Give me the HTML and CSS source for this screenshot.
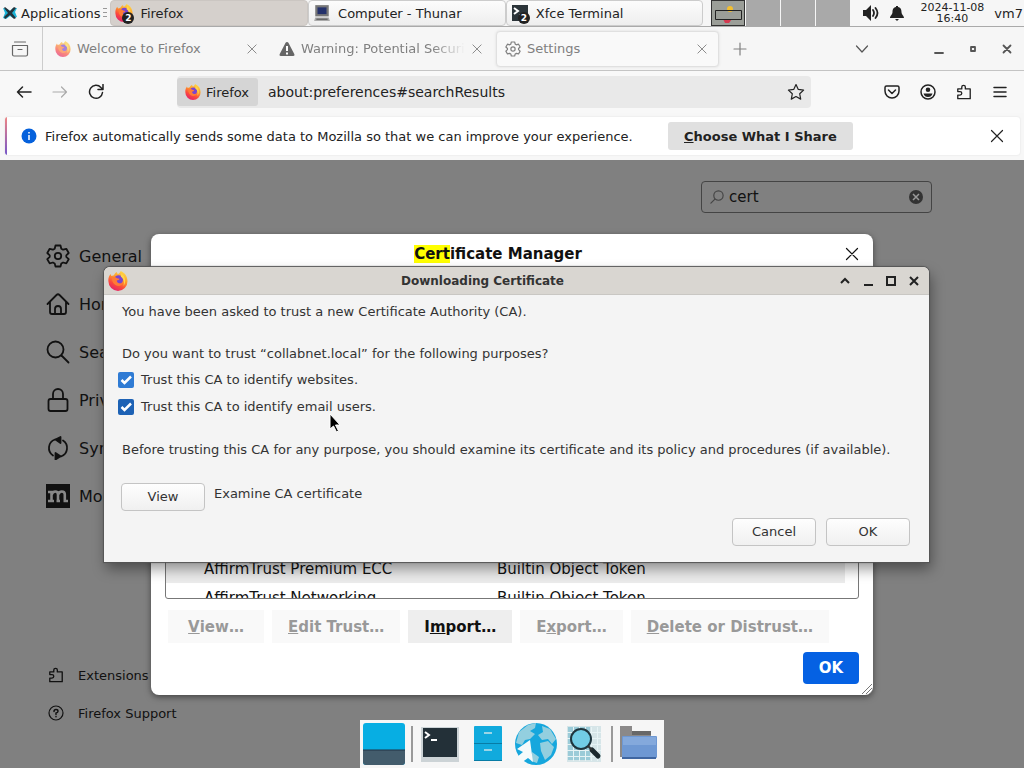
FILE: index.html
```html
<!DOCTYPE html>
<html lang="en">
<head>
<meta charset="utf-8">
<meta name="viewport" content="width=device-width, initial-scale=1">
<title>Settings</title>
<link rel="stylesheet" href="styles.css">
</head>
<body>
<svg class="defs" aria-hidden="true">
  <defs>
    <linearGradient id="flame" x1="0.8" y1="0" x2="0.3" y2="1">
      <stop offset="0" stop-color="#ffe04a"/><stop offset="0.4" stop-color="#ff9a2b"/><stop offset="0.7" stop-color="#fb4a3c"/><stop offset="1" stop-color="#e2206c"/>
    </linearGradient>
    <symbol id="firefox" viewBox="0 0 20 20">
      <path fill="url(#flame)" d="M1 5.500 2.400 3l1 2 2.600-.8C6.500 2.700 7.500 1.600 9 1c-.2 1 .3 1.700 1.200 2.100C11.600 2 12.500 1 12.600 0c4.500 1.800 6.900 5.800 6.900 10.200A9.600 9.600 0 0 1 10 20 9.700 9.700 0 0 1 .4 10.300C.3 8.500.4 7 1 5.500Z"/>
      <circle cx="10.600" cy="8.700" r="4.400" fill="#7a45cf"/>
      <path fill="#ff7a36" d="M4 6.500c2-1 3.700-.5 5 .8l2.500.4c-.2 1-1.400 1.600-2.700 1.900.1 2.700 3 3.800 6.200 2.400-1.300 2.800-4.200 3.500-6.500 2.600C5.500 13.500 3.600 10 4 6.500Z"/>
      <path fill="#ffd54a" d="M13.500 2.500c4 3 5 8.500 2 12.500 1-4 .5-7.500-2.700-9.300Z"/>
    </symbol>
    <symbol id="cross" viewBox="0 0 16 16"><path d="m2.500 2.500 11 11m0-11-11 11"/></symbol>
    <symbol id="gear" viewBox="0 0 24 24"><path d="m9.500 1.500 5 0 .8 3.200 1.800 1 3.200-.9 2.400 4.200-2.400 2.300v1.600l2.400 2.300-2.400 4.200-3.200-.9-1.800 1-.8 3h-5l-.8-3-1.800-1-3.200.9-2.400-4.200 2.400-2.300v-1.600L1.300 9l2.400-4.200 3.200.9 1.800-1Z"/><circle cx="12" cy="12" r="3.200"/></symbol>
    <symbol id="puzzle" viewBox="0 0 18 18"><path d="M2 16.500V12.500h2.500a2 2 0 0 0 0-4H2V5.500h4.500V3.500a2 2 0 0 1 4 0v2H16v11Z"/></symbol>
    <symbol id="lens" viewBox="0 0 24 24"><circle cx="9.500" cy="9.500" r="8"/><path d="m15.500 15.500 7 7"/></symbol>
  </defs>
</svg>

<div class="desktop">
  <header class="panel">
    <button class="apps"><svg class="i16 xfce" viewBox="0 0 16 16"><path fill="#1bb4d8" d="m1 3 4 1 3 2 3-3 4 0-2 4 2 5-4 1-3-2-4 3-3-1 2-5Z"/><path fill="#23333b" d="m3 2 5 4 4-4 2 1-4 5 4 5-2 1-4-4-5 4-1-2 4-4-4-5Z"/></svg><span>Applications</span></button>
    <span class="grip"></span>
    <nav class="tasks">
      <button class="task on"><svg class="i18"><use href="#firefox"/></svg><b class="badge">2</b><span>Firefox</span></button>
      <button class="task"><svg class="i18" viewBox="0 0 16 16"><path fill="#777" d="M2 1h12v10H2Z"/><path fill="#24316b" d="M4 3h8v6H4Z"/><path fill="#aaa" d="M2 12h12l1 3H1Z"/><path stroke="#555" d="M3 13.500h10"/></svg><span>Computer - Thunar</span></button>
      <button class="task"><svg class="i18" viewBox="0 0 18 18"><path fill="#2b3439" d="M1 1h16v16H1Z"/><path fill="none" stroke="#fff" stroke-width="2" d="m3 4 4 3-4 3M8 11h4"/></svg><b class="badge">2</b><span>Xfce Terminal</span></button>
    </nav>
    <div class="pager"><span class="ws on"><svg viewBox="0 0 32 26"><circle cx="18" cy="8" r="3" fill="#f3bf30"/><path fill="#d43a50" d="M11 18h9l-3 4h-4Z"/><path fill="none" stroke="#222" d="M3.500 9.500h26v9h-26Z"/></svg></span><span class="ws"></span><span class="ws"></span><span class="ws"></span></div>
    <svg class="i18 dark speaker" viewBox="0 0 18 18"><path fill="currentColor" d="M1 6h3l5-5v16l-5-5H1Z"/><path class="line thick" d="M11 6q2 3 0 6M13.500 4q4 5 0 10"/></svg>
    <svg class="i16 dark bell" viewBox="0 0 16 16"><path fill="currentColor" d="M7 1h2v1c3 .6 3.500 3 3.500 5 0 3 2.500 3.500 2.500 6H1c0-2.500 2.500-3 2.500-6 0-2 .5-4.400 3.500-5ZM6 14h4l-2 2Z"/></svg>
    <time class="clock">2024-11-08<br>16:40</time>
    <span class="user">vm7</span>
  </header>

  <div class="tabs">
    <button class="recent" aria-label="Recent browsing"><svg class="i18 line" viewBox="0 0 18 18"><path d="M3.500 2h11M1.500 5.500h15v9q0 1.500-1.500 1.500H3q-1.500 0-1.500-1.500ZM7 9.500h4"/></svg></button>
    <div class="tab"><svg class="i16 faded"><use href="#firefox"/></svg><span>Welcome to Firefox</span><button class="close" aria-label="Close tab"><svg class="i12 line"><use href="#cross"/></svg></button></div>
    <div class="tab long"><svg class="i16" viewBox="0 0 16 16"><path fill="#666" d="M8 1q1 0 1.400.8l6 11.500Q16 15 14.300 15H1.700Q0 15 .6 13.300l6-11.500Q7 1 8 1Z"/><path stroke="#fff" stroke-width="2" d="M8 5v5M8 11.500v2"/></svg><span class="cut">Warning: Potential Security Risk Ahead</span><button class="close" aria-label="Close tab"><svg class="i12 line"><use href="#cross"/></svg></button></div>
    <div class="tab active"><svg class="i16 line heavy"><use href="#gear"/></svg><span>Settings</span><button class="close" aria-label="Close tab"><svg class="i12 line"><use href="#cross"/></svg></button></div>
    <button class="new" aria-label="New tab"><svg class="i16 line" viewBox="0 0 16 16"><path d="M8 2v12M2 8h12"/></svg></button>
    <div class="wincontrols">
      <button class="down" aria-label="List tabs"><svg class="i14 line" viewBox="0 0 14 14"><path d="m1.500 4 5.500 6 5.500-6"/></svg></button>
      <button aria-label="Minimize"><svg class="i12 line thick" viewBox="0 0 12 12"><path d="M2 10h8"/></svg></button>
      <button aria-label="Restore"><svg class="i12 line thick" viewBox="0 0 12 12"><path d="M4 4h4v4H4Z"/></svg></button>
      <button aria-label="Close"><svg class="i12 line thick" viewBox="0 0 12 12"><path d="m2.500 2.500 7 7m0-7-7 7"/></svg></button>
    </div>
  </div>

  <div class="toolbar">
    <div class="nav">
      <button aria-label="Back"><svg class="i16 line mid" viewBox="0 0 16 16"><path d="M15 8H1.500m5-5-5 5 5 5"/></svg></button>
      <button class="off" aria-label="Forward" disabled><svg class="i16 line" viewBox="0 0 16 16"><path d="M1 8h13.500m-5-5 5 5-5 5"/></svg></button>
      <button aria-label="Reload"><svg class="i16 line mid" viewBox="0 0 16 16"><path d="M14.500 8.500a6.500 6.500 0 1 1-1.600-5L14.500 5M15 .5v5h-5"/></svg></button>
    </div>
    <div class="urlbar">
      <span class="identity"><svg class="i16"><use href="#firefox"/></svg><span>Firefox</span></span>
      <input class="url" aria-label="Address" value="about:preferences#searchResults">
      <svg class="i18 line" viewBox="0 0 18 18"><path d="m9 1.500 2.300 4.900 5.300.7-3.900 3.700 1 5.300L9 13.500l-4.700 2.600 1-5.300L1.400 7.100l5.300-.7Z"/></svg>
    </div>
    <div class="actions">
      <button aria-label="Save to Pocket"><svg class="i16 line mid" viewBox="0 0 16 16"><path d="M2.500 2h11Q15 2 15 3.500V7a7 7 0 0 1-14 0V3.500Q1 2 2.500 2ZM4.500 6 8 9.500 11.500 6"/></svg></button>
      <button aria-label="Account"><svg class="i16 line mid" viewBox="0 0 16 16"><circle cx="8" cy="8" r="7"/><path fill="currentColor" stroke="none" d="M8 3.500a2.300 2.300 0 1 1 0 4.600 2.300 2.300 0 0 1 0-4.600ZM3.500 9.500h9Q11.500 13 8 13T3.500 9.500Z"/></svg></button>
      <button aria-label="Extensions"><svg class="i16 line mid"><use href="#puzzle"/></svg></button>
      <button aria-label="Menu"><svg class="i16 line mid" viewBox="0 0 16 16"><path d="M2 3.500h12M2 8h12M2 12.500h12"/></svg></button>
    </div>
  </div>

  <div class="notice">
    <div class="bar">
      <svg class="i16" viewBox="0 0 16 16"><circle cx="8" cy="8" r="7.500" fill="#0561dc"/><path stroke="#fff" stroke-width="1.500" d="M8 4v1.500M8 7v5"/></svg>
      <span>Firefox automatically sends some data to Mozilla so that we can improve your experience.</span>
      <button class="choose"><u>C</u>hoose What I Share</button>
      <button class="dismiss" aria-label="Dismiss"><svg class="i16 line"><use href="#cross"/></svg></button>
    </div>
  </div>

  <main class="page">
    <nav class="side">
      <a href="#general"><svg class="i24 line heavy"><use href="#gear"/></svg>General</a>
      <a href="#home"><svg class="i24 line heavy" viewBox="0 0 24 24"><path d="m1.500 12 9-9q1.500-1.500 3 0l9 9M4 10v10q0 2 2 2h12q2 0 2-2V10M9 22v-5a3 3 0 0 1 6 0v5"/></svg>Home</a>
      <a href="#search"><svg class="i24 line heavy"><use href="#lens"/></svg>Search</a>
      <a href="#privacy"><svg class="i24 line heavy" viewBox="0 0 24 24"><path d="M4.500 11h15q2 0 2 2v8q0 2-2 2h-15q-2 0-2-2v-8q0-2 2-2ZM7 11V6a5 5 0 0 1 10 0v5"/></svg>Privacy &amp; Security</a>
      <a href="#sync"><svg class="i24 line heavy" viewBox="0 0 24 24"><path d="M9 3.500A9 9 0 0 0 7 19.500M15 20.500A9 9 0 0 0 17 4.500"/><path fill="currentColor" d="m14.500 1-5 2.600 5 3.400ZM9.500 17v6.500l5-3.200Z"/></svg>Sync</a>
      <a href="#more"><svg class="i24" viewBox="0 0 24 24"><path fill="#111" d="M0 0h24v24H0Z"/><path fill="none" stroke="#888" stroke-width="2.600" d="M2 8h3.500v9M2 17h6M5.500 11q1-3.500 3.800-3.500 2.700 0 2.700 3V17m-1.500 0H14M12 11q1-3.500 3.800-3.500 3 0 3 3V17H22"/></svg>More from Mozilla</a>
    </nav>
    <nav class="foot">
      <a href="#addons"><svg class="i16 line mid"><use href="#puzzle"/></svg>Extensions &amp; Themes</a>
      <a href="#support"><svg class="i16 line" viewBox="0 0 16 16"><circle cx="8" cy="8" r="7"/><path class="mid" d="M6 6.500q0-2 2-2t2 1.700Q10 7.500 8 8v1.500M8 11.500v.3"/></svg>Firefox Support</a>
    </nav>
    <div class="find">
      <svg class="i14 line flip"><use href="#lens"/></svg>
      <input aria-label="Find in Settings" value="cert">
      <button aria-label="Clear"><svg class="i14" viewBox="0 0 14 14"><circle cx="7" cy="7" r="7" fill="#333"/><path stroke="#999" stroke-width="1.500" d="m4 4 6 6m0-6-6 6"/></svg></button>
    </div>
  </main>

  <section class="manager" role="dialog" aria-labelledby="mt">
    <div class="mhead"><h2 id="mt"><mark>Cert</mark>ificate Manager</h2><button aria-label="Close"><svg class="i16 line"><use href="#cross"/></svg></button></div>
    <div class="list">
      <table>
        <tr class="alt"><td>AffirmTrust Premium ECC</td><td>Builtin Object Token</td></tr>
        <tr><td>AffirmTrust Networking</td><td>Builtin Object Token</td></tr>
      </table>
    </div>
    <div class="mbuttons">
      <button disabled><u>V</u>iew…</button>
      <button disabled><u>E</u>dit Trust…</button>
      <button>I<u>m</u>port…</button>
      <button disabled>E<u>x</u>port…</button>
      <button disabled><u>D</u>elete or Distrust…</button>
    </div>
    <button class="primary">OK</button>
    <svg class="resize" viewBox="0 0 10 10"><path stroke="#777" d="m0 10 10-10M4 10l6-6M7.500 10 10 7.500"/></svg>
  </section>

  <section class="trust" role="dialog" aria-labelledby="tt">
    <div class="thead">
      <svg class="i20"><use href="#firefox"/></svg>
      <h2 id="tt">Downloading Certificate</h2>
      <div class="tctl">
        <button aria-label="Shade"><svg class="i12 line bold" viewBox="0 0 12 12"><path d="m2 8 4-4 4 4"/></svg></button>
        <button aria-label="Minimize"><svg class="i12 line bold" viewBox="0 0 12 12"><path d="M2 10h9"/></svg></button>
        <button aria-label="Maximize"><svg class="i12 line bold" viewBox="0 0 12 12"><path d="M2 2h8v8H2Z"/></svg></button>
        <button aria-label="Close"><svg class="i12 line bold" viewBox="0 0 12 12"><path d="m2 2 8 8m0-8-8 8"/></svg></button>
      </div>
    </div>
    <div class="tbody">
      <p>You have been asked to trust a new Certificate Authority (CA).</p>
      <p class="ask">Do you want to trust “collabnet.local” for the following purposes?</p>
      <label><input type="checkbox" checked><span>Trust this CA to identify websites.</span></label>
      <label class="second"><input type="checkbox" checked><span>Trust this CA to identify email users.</span></label>
      <p class="before">Before trusting this CA for any purpose, you should examine its certificate and its policy and procedures (if available).</p>
      <div class="exam"><button id="view">View</button><label class="plain" for="view">Examine CA certificate</label></div>
      <div class="confirm"><button>Cancel</button><button>OK</button></div>
    </div>
    <svg class="pointer" viewBox="0 0 12 20"><path fill="#000" stroke="#fff" d="M1 1v15l3.500-3 3 6 2-1-3-6H11Z"/></svg>
  </section>

  <nav class="dock">
    <button aria-label="Show desktop"><svg viewBox="0 0 42 42"><rect width="42" height="42" rx="3" fill="#07aee3"/><path fill="#435c6c" d="M0 27h42v12q0 3-3 3H3q-3 0-3-3Z"/><path stroke="#234" d="M0 27h42"/></svg></button>
    <i></i>
    <button aria-label="Terminal"><svg viewBox="0 0 42 42"><path fill="#ccd3d6" d="M2 4h38v35H2Z"/><path fill="#233038" d="M4 5h34v29H4Z"/><path fill="none" stroke="#fff" stroke-width="2" d="m6 9 4 3-4 3M12 17h6"/></svg></button>
    <button aria-label="Files"><svg viewBox="0 0 42 42"><rect x="7" y="3" width="28" height="35" rx="1" fill="#11aadd"/><path stroke="#087ca5" d="M7 20.500h28M7 37.500h28"/><path stroke="#9bd5e6" stroke-width="2" d="M17 10h8M17 27h8"/></svg></button>
    <button aria-label="Web browser"><svg viewBox="0 0 42 42"><circle cx="21" cy="21" r="21" fill="#16a7dd"/><path fill="#93cfdf" d="m4 9 9-7 8-2-1 5-5 3 5 3-5 5-5 1-3 5-6-2Zm23-6 8 3 6 10-4 5-4-5-6 1-4-5 5-3Zm-2 17 8-2 6 6-3 8-6 5-4-9Zm-8 9 7 5-2 6-6-2Z"/><path fill="#f5fafa" d="M15 17l3 22-5-4-7 5-4-6 6-5-6-3Z"/></svg></button>
    <button aria-label="Search files"><svg viewBox="0 0 42 42"><path fill="#d6e5e8" d="M4 3h34v36H4Z"/><path fill="#9bcbd8" d="M5 4h22v33H5Z"/><path stroke="#e7f3f5" d="M4 9.500h34M4 15.500h34M4 21.500h34M4 27.500h34M4 33.500h34M10.500 4v34M16.500 4v34M22.500 4v34M28.500 4v34M34.500 4v34"/><circle cx="18" cy="16" r="10" fill="#71cce5" stroke="#1e343d" stroke-width="2"/><path stroke="#1c292e" stroke-width="5" stroke-linecap="round" d="m29 27 6 6"/><path stroke="#333" stroke-width="2" d="m25 23 4 4"/></svg></button>
    <i></i>
    <button aria-label="Home folder"><svg viewBox="0 0 42 42"><path fill="#8b8989" d="M1 3h12v5h19v26H1Z"/><path fill="#686868" d="M13 8h19v4H13Z"/><rect x="3" y="13" width="35" height="22" rx="1" fill="#6e98d3"/><path fill="#84a9dc" d="M4 14h33v8H4Z"/><path fill="#3f66a1" d="M3 34h34v2H3Z"/></svg></button>
  </nav>
</div>
</body>
</html>
```
FILE: styles.css
```css
* { box-sizing: border-box; }
body { margin: 0; font: 13px "DejaVu Sans", sans-serif; color: #222; }
button, input { font: inherit; color: inherit; border: 0; background: none; padding: 0; margin: 0; }
button { display: flex; align-items: center; justify-content: center; }
h2, p { margin: 0; }
a { color: inherit; text-decoration: none; }
svg { display: block; flex: none; }
.defs { position: absolute; width: 0; height: 0; }
.desktop { position: relative; display: flex; flex-direction: column; min-height: 100vh; overflow: hidden; background: #808080; }

.i12 { width: 12px; height: 12px; }
.i14 { width: 14px; height: 14px; }
.i16 { width: 16px; height: 16px; }
.i18 { width: 18px; height: 18px; }
.i20 { width: 20px; height: 20px; }
.i24 { width: 24px; height: 24px; }
.line { fill: none; stroke: currentColor; stroke-width: 1.2; stroke-linejoin: round; stroke-linecap: round; }
.mid { stroke-width: 1.5; }
.thick, .heavy { stroke-width: 1.8; }
.bold { stroke-width: 2; stroke-linecap: butt; stroke-linejoin: miter; }
.flip { transform: scaleX(-1); stroke-width: 2; }
.faded { opacity: 0.65; }
.dark { color: #222; }

.panel { display: flex; align-items: center; height: 26px; padding-right: 1px; background: #f6f6f6; white-space: nowrap; }
.apps { gap: 3px; padding-left: 2px; }
.grip { width: 4px; height: 10px; margin: 0 3px; background: repeating-linear-gradient(#999 0 1px, transparent 1px 4px); }
.tasks { display: flex; flex: 1; height: 26px; }
.task { position: relative; flex: 1; justify-content: flex-start; gap: 7px; padding-left: 4px; border: 1px solid #ccc; border-radius: 4px; background: linear-gradient(#fcfcfc, #eee); }
.task.on { background: #d5d0cc; border-color: #cbc6c2; }
.badge { position: absolute; left: 11px; top: 11px; width: 12px; height: 12px; border-radius: 6px; background: #222; color: #fff; font-size: 9px; line-height: 12px; text-align: center; }
.pager { display: flex; gap: 1px; height: 26px; margin-left: 8px; }
.ws { width: 34px; background: #a9a9a9; }
.ws.on { border: 1px solid #333; background: #9b9e98; }
.speaker { margin-left: 12px; }
.bell { margin-left: 9px; }
.clock { margin-left: 15px; font-size: 11px; line-height: 11px; text-align: center; }
.user { margin-left: 10px; }

.tabs { display: flex; align-items: center; height: 45px; background: #f6f6f6; border-top: 1px solid #aaa; border-bottom: 1px solid #c4c4c4; color: #808080; }
.recent { width: 43px; height: 100%; padding-right: 3px; border-right: 1px solid #ccc; color: #666; }
.tab { display: flex; align-items: center; gap: 6px; width: 222px; height: 36px; padding: 0 7px 0 12px; white-space: nowrap; }
.tab .close { margin-left: auto; }
.tab.active { width: 223px; padding: 0 10px 0 8px; background: #f9f9f9; border: 1px solid #e0e0e0; border-radius: 4px; box-shadow: 0 0 3px #ddd; }
.tab.long { width: 231px; padding: 0 13px 0 14px; }
.cut { flex: 1; overflow: hidden; -webkit-mask-image: linear-gradient(90deg, #000 80%, transparent); mask-image: linear-gradient(90deg, #000 80%, transparent); }
.new { width: 42px; height: 36px; }
.wincontrols { display: flex; gap: 22px; margin-left: auto; padding-right: 11px; color: #555; }
.down { margin-right: 42px; }

.toolbar { display: flex; align-items: center; height: 42px; background: #f8f8f8; }
.nav { display: flex; gap: 20px; padding-left: 16px; }
.off { color: #aaa; }
.urlbar { display: flex; flex: 1; align-items: center; height: 32px; margin: 0 73px; padding-right: 6px; border-radius: 4px; background: #e9e9e9; }
.identity { display: flex; align-items: center; gap: 5px; height: 28px; padding: 0 9px 0 8px; border-radius: 3px; background: #d5d5d5; }
.url { flex: 1; min-width: 0; padding-left: 10px; font-size: 14px; }
.actions { display: flex; gap: 20px; padding-right: 16px; }

.notice { padding: 4px 4px 5px 5px; background: #f7f7f7; }
.bar { display: flex; align-items: center; height: 38px; padding: 0 15px 0 16px; background: linear-gradient(#ef8584, #7556c9) left / 2px 100% no-repeat #fff; border-radius: 3px; box-shadow: 0 0 2px #ddd; white-space: nowrap; }
.bar > span { min-width: 602px; margin: 0 21px 0 8px; }
.choose { height: 28px; padding: 0 16px; border-radius: 3px; background: #e0e0e0; font-weight: bold; }
.dismiss { margin-left: auto; }

.page { display: grid; grid-template-columns: 1fr auto; grid-template-rows: auto 1fr; flex: 1; padding: 21px 92px 47px 46px; color: #111; }
.side { display: flex; flex-direction: column; gap: 24px; padding-top: 63px; font-size: 16px; }
.side a { display: flex; align-items: center; gap: 9px; height: 24px; }
.foot { display: flex; flex-direction: column; align-self: end; gap: 22px; padding: 0 2px; grid-row: 2; }
.foot a { display: flex; align-items: center; gap: 14px; height: 16px; }
.find { display: flex; align-items: center; gap: 5px; width: 231px; height: 32px; padding: 0 8px; border: 1px solid #444; border-radius: 4px; font-size: 15px; }
.find svg { color: #444; }
.find input { flex: 1; min-width: 0; }

.manager { position: absolute; left: 50%; top: 234px; width: 722px; max-width: 100%; margin-left: -361px; padding: 0 14px 11px; border-radius: 8px; background: #fff; box-shadow: 0 2px 6px #444; color: #111; font-size: 15px; }
.mhead { display: grid; grid-template-columns: 1fr auto; align-items: center; height: 39px; margin-right: -1px; }
.mhead h2 { padding-right: 13px; font-size: 15px; text-align: center; }
mark { background: #ff0; color: inherit; }
.list { height: 326px; padding-top: 280px; border: 1px solid #777; border-radius: 3px; overflow: hidden; }
table { width: calc(100% - 13px); border-spacing: 0; table-layout: fixed; }
td { height: 29px; padding: 0 0 0 38px; white-space: nowrap; }
td + td { padding-left: 0; }
td:first-child { width: 331px; }
.alt { background: #ebebeb; }
.mbuttons { display: flex; gap: 8px; padding: 11px 3px 9px; }
.mbuttons button { min-width: 96px; height: 33px; padding: 0 16px; background: #eee; font-weight: bold; }
.mbuttons button:disabled { background: #f9f9f9; color: #999; }
.primary { width: 56px; height: 32px; margin-left: auto; border-radius: 4px; background: #0561e3; color: #fff; font-weight: bold; }
.resize { position: absolute; right: 1px; bottom: 1px; width: 10px; height: 10px; }

.trust { position: absolute; left: 50%; top: 267px; width: 825px; margin-left: -408px; border-radius: 6px 6px 0 0; background: #f4f4f4; box-shadow: 0 0 1px 1px #555, 2px 7px 14px #0006; color: #333; }
.thead { display: grid; grid-template-columns: 84px 1fr 84px; align-items: center; height: 28px; padding: 0 6px 0 4px; border-bottom: 1px solid #c9c7c3; border-radius: 6px 6px 0 0; background: #d9d6d1; }
.thead h2 { padding-right: 66px; font-size: 12px; text-align: center; }
.tctl { display: flex; gap: 11px; color: #222; }
.tbody { padding: 8px 19px 16px 18px; line-height: 18px; white-space: nowrap; }
.ask { padding-top: 24px; }
.tbody label { display: flex; align-items: center; gap: 7px; height: 18px; margin: 8px 0 0 -4px; }
.tbody .second { margin-top: 9px; }
.tbody input { appearance: none; width: 16px; height: 16px; border-radius: 2px; background: #2f7bd4 url("data:image/svg+xml,%3Csvg xmlns='http://www.w3.org/2000/svg' viewBox='0 0 16 16'%3E%3Cpath fill='none' stroke='white' stroke-width='2.500' d='m3.500 8 3 3L13 4.500'/%3E%3C/svg%3E"); }
.tbody .second input { background-color: #1d62b5; }
.before { padding-top: 25px; }
.exam { display: flex; align-items: center; gap: 9px; margin-left: -1px; padding-top: 24px; }
.tbody .plain { height: 22px; margin: 0; align-self: flex-start; }
.trust .tbody button { width: 84px; height: 28px; border: 1px solid #c4c4c4; border-radius: 4px; background: linear-gradient(#fefefe, #f0f0f0); }
.confirm { display: flex; justify-content: flex-end; gap: 10px; padding-top: 7px; }
.pointer { position: absolute; left: 225px; top: 146px; width: 12px; height: 20px; }

.dock { position: absolute; left: 50%; bottom: 0; display: flex; align-items: center; gap: 6px; height: 48px; margin-left: -152px; padding: 0 3px; background: #f6f6f6; }
.dock svg { width: 42px; height: 42px; }
.dock i { width: 2px; height: 36px; background: #999; }
```
